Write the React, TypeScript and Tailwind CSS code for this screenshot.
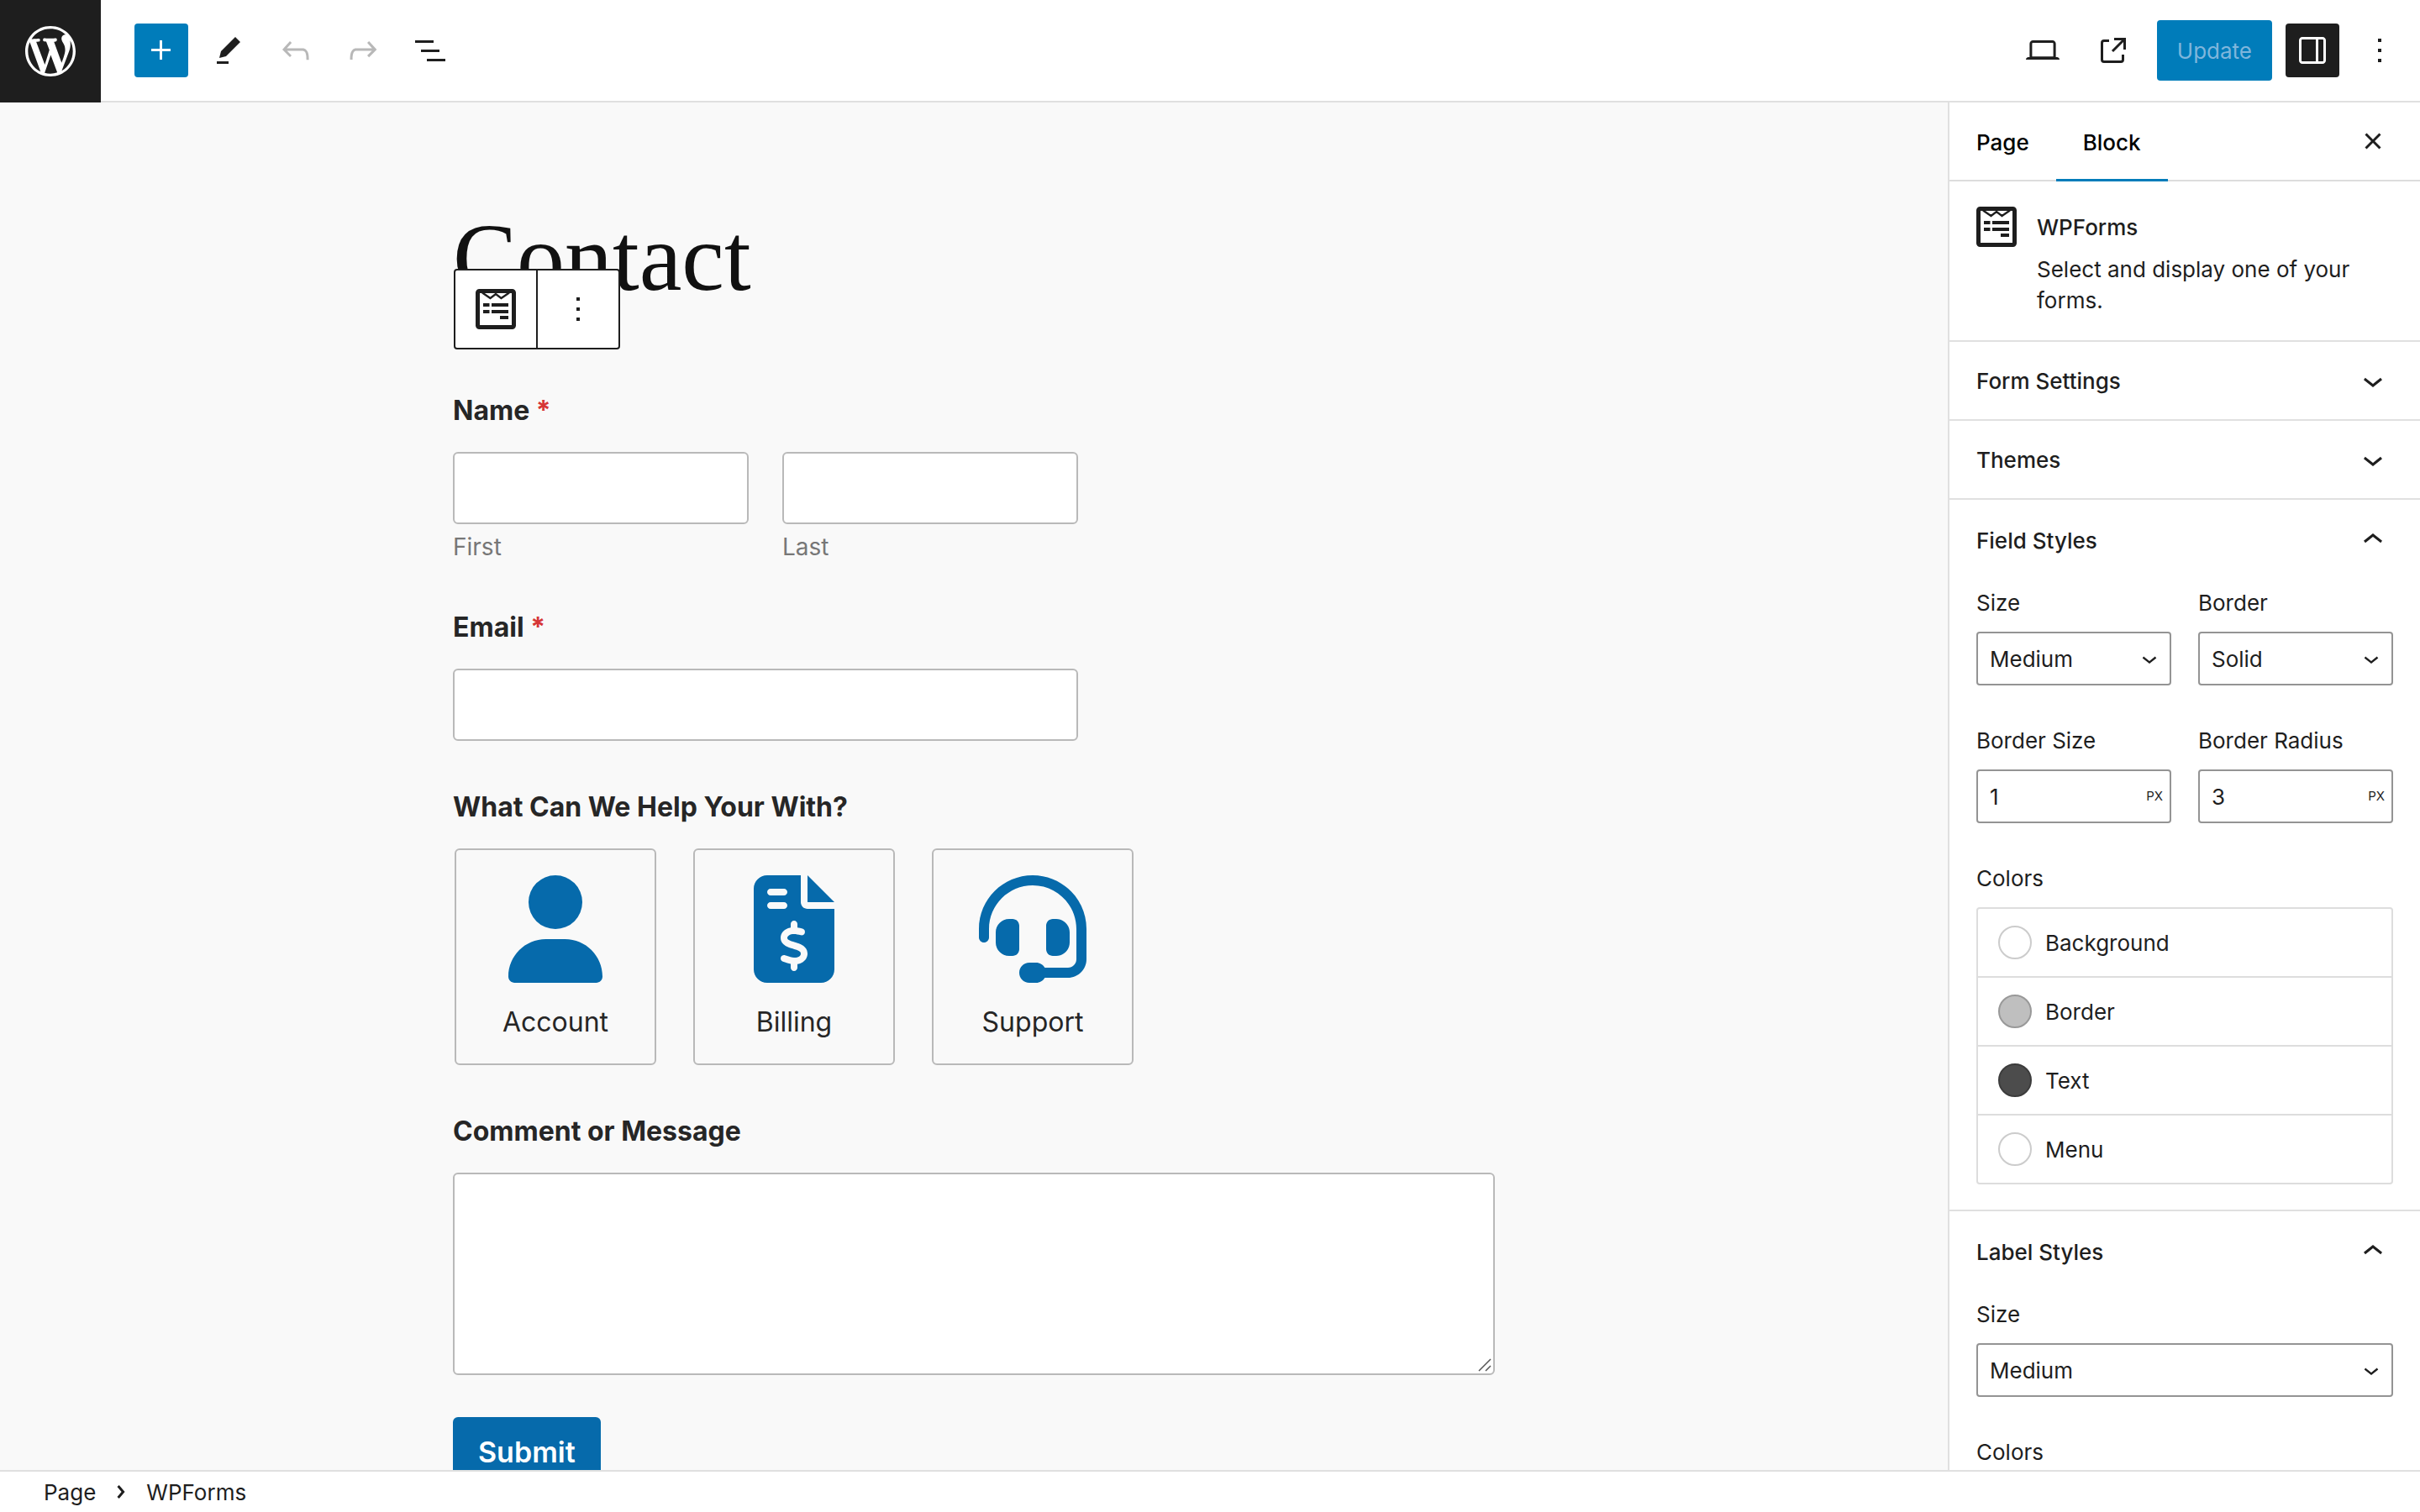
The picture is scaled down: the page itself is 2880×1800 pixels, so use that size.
import type { ReactNode } from "react";
import { FaFileInvoiceDollar, FaHeadset, FaUser } from "react-icons/fa6";

const icons = {
  plus: "M11 12.5V17.5H12.5V12.5H17.5V11H12.5V6H11V11H6V12.5H11Z",
  pencil: "m19 7-3-3-8.5 8.5-1 4 4-1L19 7Zm-7 11.5H5V20h7v-1.5Z",
  undo: "M18.3 11.7c-.6-.6-1.4-.9-2.3-.9H6.7l2.9-3.3-1.1-1-4.5 5L8.5 16l1-1-2.7-2.7H16c.5 0 .9.2 1.3.5 1 1 1 3.4 1 4.5v.3h1.5v-.2c0-1.5 0-4.3-1.5-5.7z",
  redo: "M15.6 6.5l-1.1 1 2.9 3.3H8c-.9 0-1.7.3-2.3.9-1.4 1.5-1.4 4.2-1.4 5.6v.2h1.5v-.3c0-1.1 0-3.5 1-4.5.3-.3.7-.5 1.3-.5h9.2L14.5 15l1.1 1.1 4.6-4.6-4.6-5z",
  listView: "M3 6h11v1.5H3V6Zm3.5 5.5h11V13h-11v-1.5ZM21 17H10v1.5h11V17Z",
  desktop:
    "M20.5 16h-.7V8c0-1.1-.9-2-2-2H6.2c-1.1 0-2 .9-2 2v8h-.7c-.8 0-1.5.7-1.5 1.5h20c0-.8-.7-1.5-1.5-1.5zM5.7 8c0-.3.2-.5.5-.5h11.6c.3 0 .5.2.5.5v7.6H5.7V8z",
  external:
    "M19.5 4.5h-7V6h4.44l-5.97 5.97 1.06 1.06L18 7.06v4.44h1.5v-7Zm-13 1a2 2 0 0 0-2 2v10a2 2 0 0 0 2 2h10a2 2 0 0 0 2-2v-3H17v3a.5.5 0 0 1-.5.5h-10a.5.5 0 0 1-.5-.5v-10a.5.5 0 0 1 .5-.5h3V5.5h-3Z",
  drawer:
    "M18 4H6c-1.1 0-2 .9-2 2v12c0 1.1.9 2 2 2h12c1.1 0 2-.9 2-2V6c0-1.1-.9-2-2-2zm-4 14.5H6c-.3 0-.5-.2-.5-.5V6c0-.3.2-.5.5-.5h8v13zm4.5-.5c0 .3-.2.5-.5.5h-2.5v-13H18c.3 0 .5.2.5.5v12z",
  more: "M13 19h-2v-2h2v2zm0-6h-2v-2h2v2zm0-6h-2V5h2v2z",
  chevronDown: "M17.5 11.6L12 16l-5.5-4.4.9-1.2L12 14l4.5-3.6 1 1.2z",
  chevronUp: "M6.5 12.4L12 8l5.5 4.4-.9 1.2L12 10l-4.5 3.6-1-1.2z",
  chevronRight:
    "M10.8622 8.04053L14.2805 12.0286L10.8622 16.0167L9.72327 15.0405L12.3049 12.0286L9.72327 9.01672L10.8622 8.04053Z",
  close:
    "M12 13.06l3.712 3.713 1.061-1.06L13.061 12l3.712-3.712-1.06-1.06L12 10.938 8.288 7.227l-1.061 1.06L10.939 12l-3.712 3.712 1.06 1.061L12 13.061z",
};

function Icon({ name, className = "size-12" }: { name: keyof typeof icons; className?: string }) {
  return (
    <svg viewBox="0 0 24 24" fill="currentColor" aria-hidden="true" className={`shrink-0 ${className}`}>
      <path d={icons[name]} />
    </svg>
  );
}

function WordPressLogo() {
  return (
    <svg viewBox="-2 -2 24 24" fill="currentColor" aria-hidden="true" className="size-[72px]">
      <path d="M20 10c0-5.51-4.49-10-10-10C4.48 0 0 4.49 0 10c0 5.52 4.48 10 10 10 5.51 0 10-4.48 10-10zM7.78 15.37L4.37 6.22c.55-.02 1.17-.08 1.17-.08.5-.06.44-1.13-.06-1.11 0 0-1.45.11-2.37.11-.18 0-.37 0-.58-.01C4.12 2.69 6.87 1.11 10 1.11c2.33 0 4.45.87 6.05 2.34-.68-.11-1.65.39-1.65 1.58 0 .74.45 1.36.9 2.1.35.61.55 1.36.55 2.46 0 1.49-1.4 5-1.4 5l-3.03-8.37c.54-.02.82-.17.82-.17.5-.05.44-1.25-.06-1.22 0 0-1.44.12-2.38.12-.87 0-2.33-.12-2.33-.12-.5-.03-.56 1.2-.06 1.22l.92.08 1.26 3.41zM17.41 10c.24-.64.74-1.87.43-4.25.7 1.29 1.05 2.71 1.05 4.25 0 3.29-1.73 6.24-4.4 7.78.97-2.59 1.94-5.2 2.92-7.78zM6.1 18.09C3.12 16.65 1.11 13.53 1.11 10c0-1.3.23-2.48.72-3.59C3.25 10.3 4.67 14.2 6.1 18.09zm4.03-6.63l2.58 6.98c-.86.29-1.76.45-2.71.45-.79 0-1.57-.11-2.29-.33.81-2.38 1.62-4.74 2.42-7.1z" />
    </svg>
  );
}

function WPFormsIcon() {
  return (
    <svg viewBox="0 0 48 48" fill="none" aria-hidden="true" className="size-12 shrink-0">
      <rect x="2.5" y="2.5" width="43" height="43" rx="2" stroke="currentColor" strokeWidth="5" />
      <path d="M8 4.5l9.500 6.500L24 6l6.500 5L40 4.500" stroke="currentColor" strokeWidth="2.400" />
      <path d="M9 17h7.500v4H9zM19 17h20v4H19zM9 25h7.500v4H9zM19 25h20v4H19zM29 32h10v4H29z" fill="currentColor" />
    </svg>
  );
}

function ToolButton({ label, disabled, className = "w-16", children }: { label: string; disabled?: boolean; className?: string; children: ReactNode }) {
  return (
    <button type="button" aria-label={label} disabled={disabled} className={`flex h-16 items-center justify-center rounded-[4px] disabled:text-[#b8b8b8] ${className}`}>
      {children}
    </button>
  );
}

function Header() {
  return (
    <header className="flex h-[122px] shrink-0 border-b-2 border-[#e0e0e0] bg-white">
      <a href="#pages" aria-label="View Pages" className="-mb-0.5 flex w-[120px] items-center justify-center bg-[#1e1e1e] text-white">
        <WordPressLogo />
      </a>
      <div className="flex items-center gap-4 pl-10">
        <ToolButton label="Add block" className="w-16 bg-[#007cba] text-white"><Icon name="plus" /></ToolButton>
        <ToolButton label="Tools"><Icon name="pencil" /></ToolButton>
        <ToolButton label="Undo" disabled><Icon name="undo" /></ToolButton>
        <ToolButton label="Redo" disabled><Icon name="redo" /></ToolButton>
        <ToolButton label="Document overview"><Icon name="listView" /></ToolButton>
      </div>
      <div className="ml-auto flex items-center gap-4 pr-4">
        <ToolButton label="View"><Icon name="desktop" /></ToolButton>
        <ToolButton label="View page" className="w-[72px]"><Icon name="external" /></ToolButton>
        <button type="button" className="h-[72px] rounded-[4px] bg-[#007cba] px-6 text-[26px] text-[#7fb6dc]">Update</button>
        <ToolButton label="Settings" className="w-16 bg-[#1e1e1e] text-white"><Icon name="drawer" /></ToolButton>
        <ToolButton label="Options"><Icon name="more" /></ToolButton>
      </div>
    </header>
  );
}

const fieldBox = "rounded-[6px] border-2 border-[#b9b9b9] bg-white";
const labelText = "mb-7 text-[32px] leading-[42px] font-bold text-[#262626]";
const subLabelText = "mt-2 block text-[28px] leading-[38px] text-[#777]";

function FieldLabel({ htmlFor, required, children }: { htmlFor?: string; required?: boolean; children: ReactNode }) {
  return (
    <label htmlFor={htmlFor} className={`block ${labelText}`}>
      {children}
      {required && <span className="text-[#d63637]"> *</span>}
    </label>
  );
}

const topics = [
  { label: "Account", icon: FaUser },
  { label: "Billing", icon: FaFileInvoiceDollar },
  { label: "Support", icon: FaHeadset },
];

function BlockToolbar() {
  return (
    <div className="absolute top-[70px] left-px flex h-24 rounded-[4px] border-2 border-[#1e1e1e] bg-white">
      <button type="button" aria-label="WPForms" className="flex w-[98px] items-center justify-center border-r-2 border-[#1e1e1e]">
        <WPFormsIcon />
      </button>
      <button type="button" aria-label="Options" className="flex w-24 items-center justify-center">
        <Icon name="more" />
      </button>
    </div>
  );
}

function Canvas() {
  return (
    <main className="min-w-0 flex-1 overflow-hidden bg-[#f9f9f9]">
      <div className="mx-auto max-w-[1240px] pt-32">
        <div className="relative mb-[104px]">
          <h1 className="font-['Liberation_Serif',serif] text-[114px] leading-[114px] text-[#111]">Contact</h1>
          <BlockToolbar />
        </div>
        <form>
          <div className="mb-14">
            <FieldLabel htmlFor="first" required>Name</FieldLabel>
            <div className="flex max-w-[744px] gap-10">
              <div className="flex-1">
                <input id="first" type="text" className={`block h-[86px] w-full ${fieldBox}`} />
                <label htmlFor="first" className={subLabelText}>First</label>
              </div>
              <div className="flex-1">
                <input id="last" type="text" className={`block h-[86px] w-full ${fieldBox}`} />
                <label htmlFor="last" className={subLabelText}>Last</label>
              </div>
            </div>
          </div>
          <div className="mb-[58px]">
            <FieldLabel htmlFor="email" required>Email</FieldLabel>
            <input id="email" type="email" className={`block h-[86px] w-full max-w-[744px] ${fieldBox}`} />
          </div>
          <fieldset className="mb-[58px]">
            <legend className={labelText}>What Can We Help Your With?</legend>
            <div className="flex gap-11 px-0.5">
              {topics.map(({ label, icon: TopicIcon }) => (
                <label key={label} className="flex h-[258px] w-60 flex-col items-center gap-7 rounded-[6px] border-2 border-[#b9b9b9] pt-[30px]">
                  <input type="radio" name="topic" value={label} className="sr-only" />
                  <TopicIcon className="h-32 w-auto text-[#066aab]" />
                  <span className="text-[32px] leading-[38px] text-[#262626]">{label}</span>
                </label>
              ))}
            </div>
          </fieldset>
          <div className="mb-[50px]">
            <FieldLabel htmlFor="message">Comment or Message</FieldLabel>
            <div className="relative">
              <textarea id="message" className={`block h-[241px] w-full resize-none ${fieldBox}`} />
              <svg viewBox="0 0 16 16" className="absolute right-1 bottom-1 size-4 text-[#555]" aria-hidden="true">
                <path d="M1 15L15 1M9 15l6-6" stroke="currentColor" strokeWidth="1.500" />
              </svg>
            </div>
          </div>
          <button type="button" className="h-[82px] rounded-[6px] bg-[#066aab] px-[30px] text-[34px] font-semibold text-white">Submit</button>
        </form>
      </div>
    </main>
  );
}

const controlBox = "h-16 w-full rounded-[4px] border-2 border-[#949494] bg-white text-[26px] text-[#1e1e1e]";

function SelectControl({ id, label, value }: { id: string; label: string; value: string }) {
  return (
    <div className="flex-1">
      <label htmlFor={id} className="mb-4 block leading-9">{label}</label>
      <div className="relative">
        <select id={id} defaultValue={value} className={`appearance-none pl-3.5 ${controlBox}`}>
          <option>{value}</option>
        </select>
        <Icon name="chevronDown" className="pointer-events-none absolute top-3.5 right-2 size-9" />
      </div>
    </div>
  );
}

function UnitControl({ id, label, value }: { id: string; label: string; value: string }) {
  return (
    <div className="flex-1">
      <label htmlFor={id} className="mb-4 block leading-9">{label}</label>
      <div className="relative">
        <input id={id} type="text" defaultValue={value} className={`pl-3.5 ${controlBox}`} />
        <span className="absolute top-[22px] right-2.5 text-[15px] leading-5">PX</span>
      </div>
    </div>
  );
}

function PanelTitle({ open, children }: { open?: boolean; children: ReactNode }) {
  return (
    <button type="button" aria-expanded={!!open} className="flex h-24 w-full items-center justify-between px-8 text-left font-medium">
      {children}
      <Icon name={open ? "chevronUp" : "chevronDown"} />
    </button>
  );
}

const swatches = [
  { label: "Background", color: "border-[#ccc] bg-white" },
  { label: "Border", color: "border-[#999] bg-[#bfbfbf]" },
  { label: "Text", color: "border-[#3c3c3c] bg-[#4c4c4c]" },
  { label: "Menu", color: "border-[#ccc] bg-white" },
];

function Sidebar() {
  return (
    <aside className="w-[562px] shrink-0 overflow-hidden border-l-2 border-[#e0e0e0] bg-white text-[26px] text-[#1e1e1e]">
      <div className="flex h-[94px] border-b-2 border-[#ddd] font-medium text-black">
        <button type="button" className="px-8 pt-0.5">Page</button>
        <button type="button" className="-mb-0.5 border-b-[3px] border-[#007cba] px-8 pt-[3px]">Block</button>
        <button type="button" aria-label="Close settings" className="mr-8 ml-auto text-[#1e1e1e]"><Icon name="close" /></button>
      </div>
      <div className="flex gap-6 border-b-2 border-[#e0e0e0] px-8 pt-[30px] pb-[29px]">
        <WPFormsIcon />
        <div>
          <h2 className="mb-1.5 leading-[50px] font-medium">WPForms</h2>
          <p className="leading-[37px]">Select and display one of your forms.</p>
        </div>
      </div>
      <section className="-mt-0.5 h-24 border-b-2 border-[#e0e0e0]"><PanelTitle>Form Settings</PanelTitle></section>
      <section className="-mt-0.5 h-24 border-b-2 border-[#e0e0e0]"><PanelTitle>Themes</PanelTitle></section>
      <section className="border-b-2 border-[#e0e0e0] pb-[30px]">
        <PanelTitle open>Field Styles</PanelTitle>
        <div className="px-8 pt-[9px]">
          <div className="mb-12 flex gap-8">
            <SelectControl id="field-size" label="Size" value="Medium" />
            <SelectControl id="field-border" label="Border" value="Solid" />
          </div>
          <div className="mb-12 flex gap-8">
            <UnitControl id="border-size" label="Border Size" value="1" />
            <UnitControl id="border-radius" label="Border Radius" value="3" />
          </div>
          <h3 className="mb-4 leading-9">Colors</h3>
          <ul className="divide-y-2 divide-[#ddd] rounded-[4px] border-2 border-[#ddd]">
            {swatches.map(({ label, color }) => (
              <li key={label}>
                <button type="button" className="flex h-20 w-full items-center gap-4 pl-6">
                  <span className={`size-10 rounded-full border-2 ${color}`} />
                  {label}
                </button>
              </li>
            ))}
          </ul>
        </div>
      </section>
      <section>
        <PanelTitle open>Label Styles</PanelTitle>
        <div className="px-8 pt-[9px]">
          <div className="mb-12 flex">
            <SelectControl id="label-size" label="Size" value="Medium" />
          </div>
          <h3 className="leading-9">Colors</h3>
        </div>
      </section>
    </aside>
  );
}

export default function App() {
  return (
    <div className="flex h-screen flex-col overflow-hidden bg-white font-['Inter',sans-serif] text-[#1e1e1e]">
      <Header />
      <div className="flex min-h-0 flex-1">
        <Canvas />
        <Sidebar />
      </div>
      <footer className="flex h-[50px] shrink-0 items-center border-t-2 border-[#e0e0e0] bg-white pl-[52px] text-[26px]">
        <nav aria-label="Block breadcrumb" className="flex items-center gap-1.5">
          <a href="#page">Page</a>
          <Icon name="chevronRight" />
          <span>WPForms</span>
        </nav>
      </footer>
    </div>
  );
}
